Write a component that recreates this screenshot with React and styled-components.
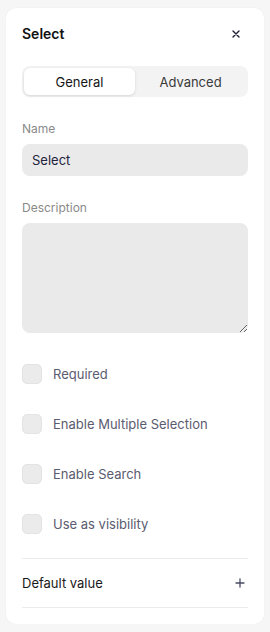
import React, { useState } from "react";
import styled, { createGlobalStyle } from "styled-components";

const GlobalStyle = createGlobalStyle`
  body {
    margin: 0;
    background: #f6f6f6;
    font-family: Inter, "Noto Sans", sans-serif;
  }
`;

const Panel = styled.div`
  box-sizing: border-box;
  width: 258px;
  height: 616px;
  margin: 8px 6px 0 6px;
  padding: 16px;
  background: #fff;
  border-radius: 10px;
  box-shadow: 0 0 2px rgba(0, 0, 0, 0.06);
  display: flex;
  flex-direction: column;
`;

const Header = styled.div`
  display: flex;
  align-items: center;
  justify-content: space-between;
  height: 20px;
`;

const Title = styled.div`
  font-size: 14px;
  font-weight: 600;
  color: #111;
`;

const IconButton = styled.button`
  border: 0;
  background: none;
  padding: 0;
  margin-right: ${(p) => p.$inset || 0}px;
  width: 16px;
  height: 16px;
  display: flex;
  align-items: center;
  justify-content: center;
  color: #1d1d35;
  cursor: pointer;
`;

const Tabs = styled.div`
  margin-top: 22px;
  height: 32px;
  box-sizing: border-box;
  padding: 2px;
  background: #f3f3f3;
  border-radius: 8px;
  display: grid;
  grid-template-columns: 1fr 1fr;
`;

const Tab = styled.button`
  border: 0;
  border-radius: 6px;
  font-family: inherit;
  font-size: 13px;
  color: ${(p) => (p.$active ? "#161616" : "#3a3a3a")};
  background: ${(p) => (p.$active ? "#fff" : "transparent")};
  box-shadow: ${(p) => (p.$active ? "0 1px 3px rgba(0,0,0,0.12)" : "none")};
  cursor: pointer;
`;

const Label = styled.div`
  margin-top: 24px;
  font-size: 12px;
  line-height: 16px;
  color: #8a8a8a;
`;

const Input = styled.input`
  margin-top: 7px;
  box-sizing: border-box;
  height: 32px;
  width: 100%;
  border: 0;
  outline: none;
  border-radius: 8px;
  background: #eaeaea;
  padding: 0 10px;
  font-family: inherit;
  font-size: 13px;
  color: #23233d;
`;

const TextArea = styled.textarea`
  margin-top: 7px;
  box-sizing: border-box;
  height: 110px;
  width: 100%;
  border: 0;
  outline: none;
  border-radius: 8px;
  background: #eaeaea;
  padding: 8px 10px;
  font-family: inherit;
  font-size: 13px;
  display: block;
  flex-shrink: 0;
`;

const Checks = styled.div`
  margin-top: 31px;
  display: flex;
  flex-direction: column;
  gap: 30px;
`;

const CheckRow = styled.label`
  display: flex;
  align-items: center;
  gap: 11px;
  height: 20px;
  font-size: 13px;
  color: #5b5b70;
  cursor: pointer;
`;

const Box = styled.span`
  box-sizing: border-box;
  width: 20px;
  height: 20px;
  border-radius: 5px;
  background: #ebebeb;
  border: 1px solid #e3e3e3;
`;

const Section = styled.div`
  margin-top: 24px;
  border-top: 1px solid #ececec;
  border-bottom: 1px solid #ececec;
  height: 48px;
  flex-shrink: 0;
  display: flex;
  align-items: center;
  justify-content: space-between;
`;

const SectionTitle = styled.div`
  font-size: 13px;
  font-weight: 400;
  color: #1a1a1a;
`;

const options = ["Required", "Enable Multiple Selection", "Enable Search", "Use as visibility"];

export default function App() {
  const [tab, setTab] = useState("General");
  return (
    <>
      <GlobalStyle />
      <Panel>
        <Header>
          <Title>Select</Title>
          <IconButton aria-label="close" $inset={4}>
            <svg width="8" height="8" viewBox="0 0 8 8" stroke="currentColor" strokeWidth="1.4" strokeLinecap="round">
              <path d="M1 1l6 6M7 1L1 7" />
            </svg>
          </IconButton>
        </Header>
        <Tabs>
          {["General", "Advanced"].map((t) => (
            <Tab key={t} $active={tab === t} onClick={() => setTab(t)}>
              {t}
            </Tab>
          ))}
        </Tabs>
        <Label>Name</Label>
        <Input defaultValue="Select" />
        <Label>Description</Label>
        <TextArea />
        <Checks>
          {options.map((o) => (
            <CheckRow key={o}>
              <Box />
              {o}
            </CheckRow>
          ))}
        </Checks>
        <Section>
          <SectionTitle>Default value</SectionTitle>
          <IconButton aria-label="add">
            <svg width="10" height="10" viewBox="0 0 10 10" stroke="#4a4a66" strokeWidth="1.3" strokeLinecap="round">
              <path d="M5 1v8M1 5h8" />
            </svg>
          </IconButton>
        </Section>
      </Panel>
    </>
  );
}
